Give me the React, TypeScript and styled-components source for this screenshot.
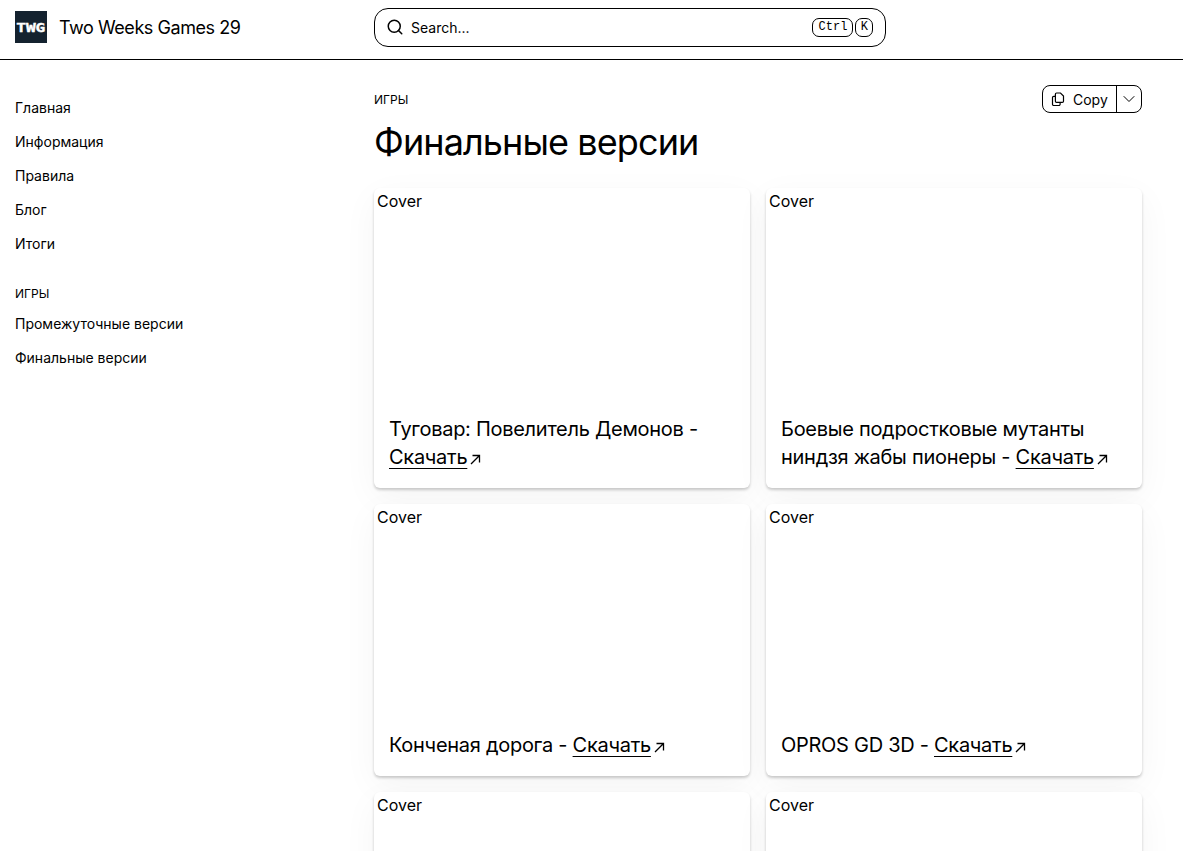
import React from "react";
import styled, { createGlobalStyle } from "styled-components";
import { ChevronDown, Search } from "lucide-react";

const Global = createGlobalStyle`
  html, body { margin: 0; padding: 0; background: #fff; color: #000; }
  body { font-family: Inter, "Noto Sans", sans-serif; height: 851px; overflow: hidden; }
  * { box-sizing: border-box; }
`;

const Page = styled.div`
  width: 1183px;
  height: 851px;
  overflow: hidden;
`;

const Header = styled.header`
  display: grid;
  grid-template-columns: 374px 512px;
  align-items: center;
  height: 60px;
  padding-bottom: 5px;
  border-bottom: 1px solid #000;
`;

const Brand = styled.div`
  display: flex;
  align-items: center;
  gap: 12px;
  padding-left: 15px;
  font-size: 18px;
  letter-spacing: -0.45px;
`;

const Logo = styled.div`
  display: flex;
  align-items: center;
  justify-content: center;
  width: 32px;
  height: 32px;
  background: #14222f;
  color: #fff;
`;

const LogoMark = styled.span`
  display: block;
  font-family: "DejaVu Sans Mono", monospace;
  font-size: 13px;
  font-weight: 700;
  letter-spacing: 0;
  -webkit-text-stroke: 0.4px #fff;
  transform: scaleX(1.24);
`;

const SearchBox = styled.div`
  display: flex;
  align-items: center;
  height: 39px;
  padding: 0 12px 0 11px;
  border: 1px solid #000;
  border-radius: 14px;
  font-size: 14px;
`;

const SearchLabel = styled.span`
  flex: 1;
  margin-left: 7px;
`;

const Kbd = styled.kbd`
  display: inline-flex;
  align-items: center;
  height: 19px;
  padding: 0 4px 0 5px;
  margin-left: 2px;
  border: 1px solid #000;
  border-radius: 7px;
  font-family: "Liberation Mono", monospace;
  font-size: 12px;
  letter-spacing: 0.1px;
`;

const Body = styled.div`
  display: grid;
  grid-template-columns: 374px 768px;
`;

const Sidebar = styled.nav`
  display: flex;
  flex-direction: column;
  padding: 31px 0 0 15px;
`;

const NavLink = styled.a`
  display: block;
  height: 34px;
  line-height: 34px;
  font-size: 14px;
  color: #000;
`;

const NavHeading = styled.div`
  margin-top: 16px;
  height: 30px;
  line-height: 34px;
  font-size: 12px;
  text-transform: uppercase;
`;

const Main = styled.main`
  padding-top: 25px;
`;

const TitleRow = styled.div`
  display: flex;
  justify-content: space-between;
  align-items: flex-start;
`;

const Eyebrow = styled.div`
  margin-top: 7px;
  font-size: 12px;
  line-height: 16px;
  text-transform: uppercase;
`;

const CopyGroup = styled.div`
  display: flex;
  height: 28px;
  border: 1px solid #000;
  border-radius: 8px;
`;

const CopyButton = styled.div`
  display: flex;
  align-items: center;
  gap: 8px;
  width: 74px;
  padding-left: 8px;
  font-size: 14px;
  border-right: 1px solid #000;
`;

const CaretButton = styled.div`
  display: flex;
  align-items: center;
  justify-content: center;
  width: 24px;
`;

const Title = styled.h1`
  margin: 7px 0 24px;
  font-size: 36px;
  line-height: 44px;
  font-weight: 400;
  letter-spacing: -0.9px;
`;

const Grid = styled.div`
  display: grid;
  grid-template-columns: repeat(2, 376px);
  gap: 16px;
  align-items: start;
`;

const Card = styled.article`
  background: #fff;
  border-radius: 6px;
  box-shadow: 0 10px 36px rgba(0, 0, 0, 0.045), 0 2px 3px rgba(0, 0, 0, 0.2);
`;

const Cover = styled.div`
  height: 211px;
  padding-left: 3px;
  font-size: 16px;
  line-height: 26px;
`;

const CardTitle = styled.h3`
  margin: 0;
  padding: 16px 15px 17px;
  font-size: 20px;
  line-height: 28px;
  font-weight: 400;
  letter-spacing: -0.28px;
`;

const Download = styled.a`
  color: #000;
  text-decoration: underline;
  text-underline-offset: 4px;
  text-decoration-thickness: 1.25px;
`;

const Arrow = styled.svg`
  display: inline-block;
  width: 13px;
  height: 13px;
  margin-left: 2px;
  vertical-align: -2px;
`;

const CopyIcon = () => (
  <svg width="14" height="15" viewBox="0 0 14 15" fill="none" stroke="#000" strokeWidth="1.2">
    <path d="M5.6 1h3.9l3 3v5.2a1.2 1.2 0 0 1-1.2 1.2H5.6a1.2 1.2 0 0 1-1.2-1.2V2.2A1.2 1.2 0 0 1 5.6 1Z" />
    <path d="M4.4 4.4H2.7a1.2 1.2 0 0 0-1.2 1.2v6.7a1.2 1.2 0 0 0 1.2 1.2h5.2a1.2 1.2 0 0 0 1.2-1.2v-1.9" />
  </svg>
);

const games: { title: string }[] = [
  { title: "Туговар: Повелитель Демонов" },
  { title: "Боевые подростковые мутанты ниндзя жабы пионеры" },
  { title: "Конченая дорога" },
  { title: "OPROS GD 3D" },
  { title: "Мрак" },
  { title: "Тихий час" },
];

export default function App() {
  return (
    <Page>
      <Global />
      <Header>
        <Brand>
          <Logo>
            <LogoMark>TWG</LogoMark>
          </Logo>
          <span>Two Weeks Games 29</span>
        </Brand>
        <SearchBox>
          <Search size={18} strokeWidth={2} />
          <SearchLabel>Search...</SearchLabel>
          <Kbd>Ctrl</Kbd>
          <Kbd>K</Kbd>
        </SearchBox>
      </Header>
      <Body>
        <Sidebar>
          <NavLink>Главная</NavLink>
          <NavLink>Информация</NavLink>
          <NavLink>Правила</NavLink>
          <NavLink>Блог</NavLink>
          <NavLink>Итоги</NavLink>
          <NavHeading>Игры</NavHeading>
          <NavLink>Промежуточные версии</NavLink>
          <NavLink>Финальные версии</NavLink>
        </Sidebar>
        <Main>
          <TitleRow>
            <Eyebrow>Игры</Eyebrow>
            <CopyGroup>
              <CopyButton>
                <CopyIcon />
                Copy
              </CopyButton>
              <CaretButton>
                <ChevronDown size={20} strokeWidth={1.2} />
              </CaretButton>
            </CopyGroup>
          </TitleRow>
          <Title>Финальные версии</Title>
          <Grid>
            {games.map((g) => (
              <Card key={g.title}>
                <Cover>Cover</Cover>
                <CardTitle>
                  {g.title} - <Download>Скачать</Download>
                  <Arrow viewBox="0 0 13 13" fill="none" stroke="#000" strokeWidth="1.3">
                    <path d="M2 11 10 3M3.5 2.5h7v7" />
                  </Arrow>
                </CardTitle>
              </Card>
            ))}
          </Grid>
        </Main>
      </Body>
    </Page>
  );
}
